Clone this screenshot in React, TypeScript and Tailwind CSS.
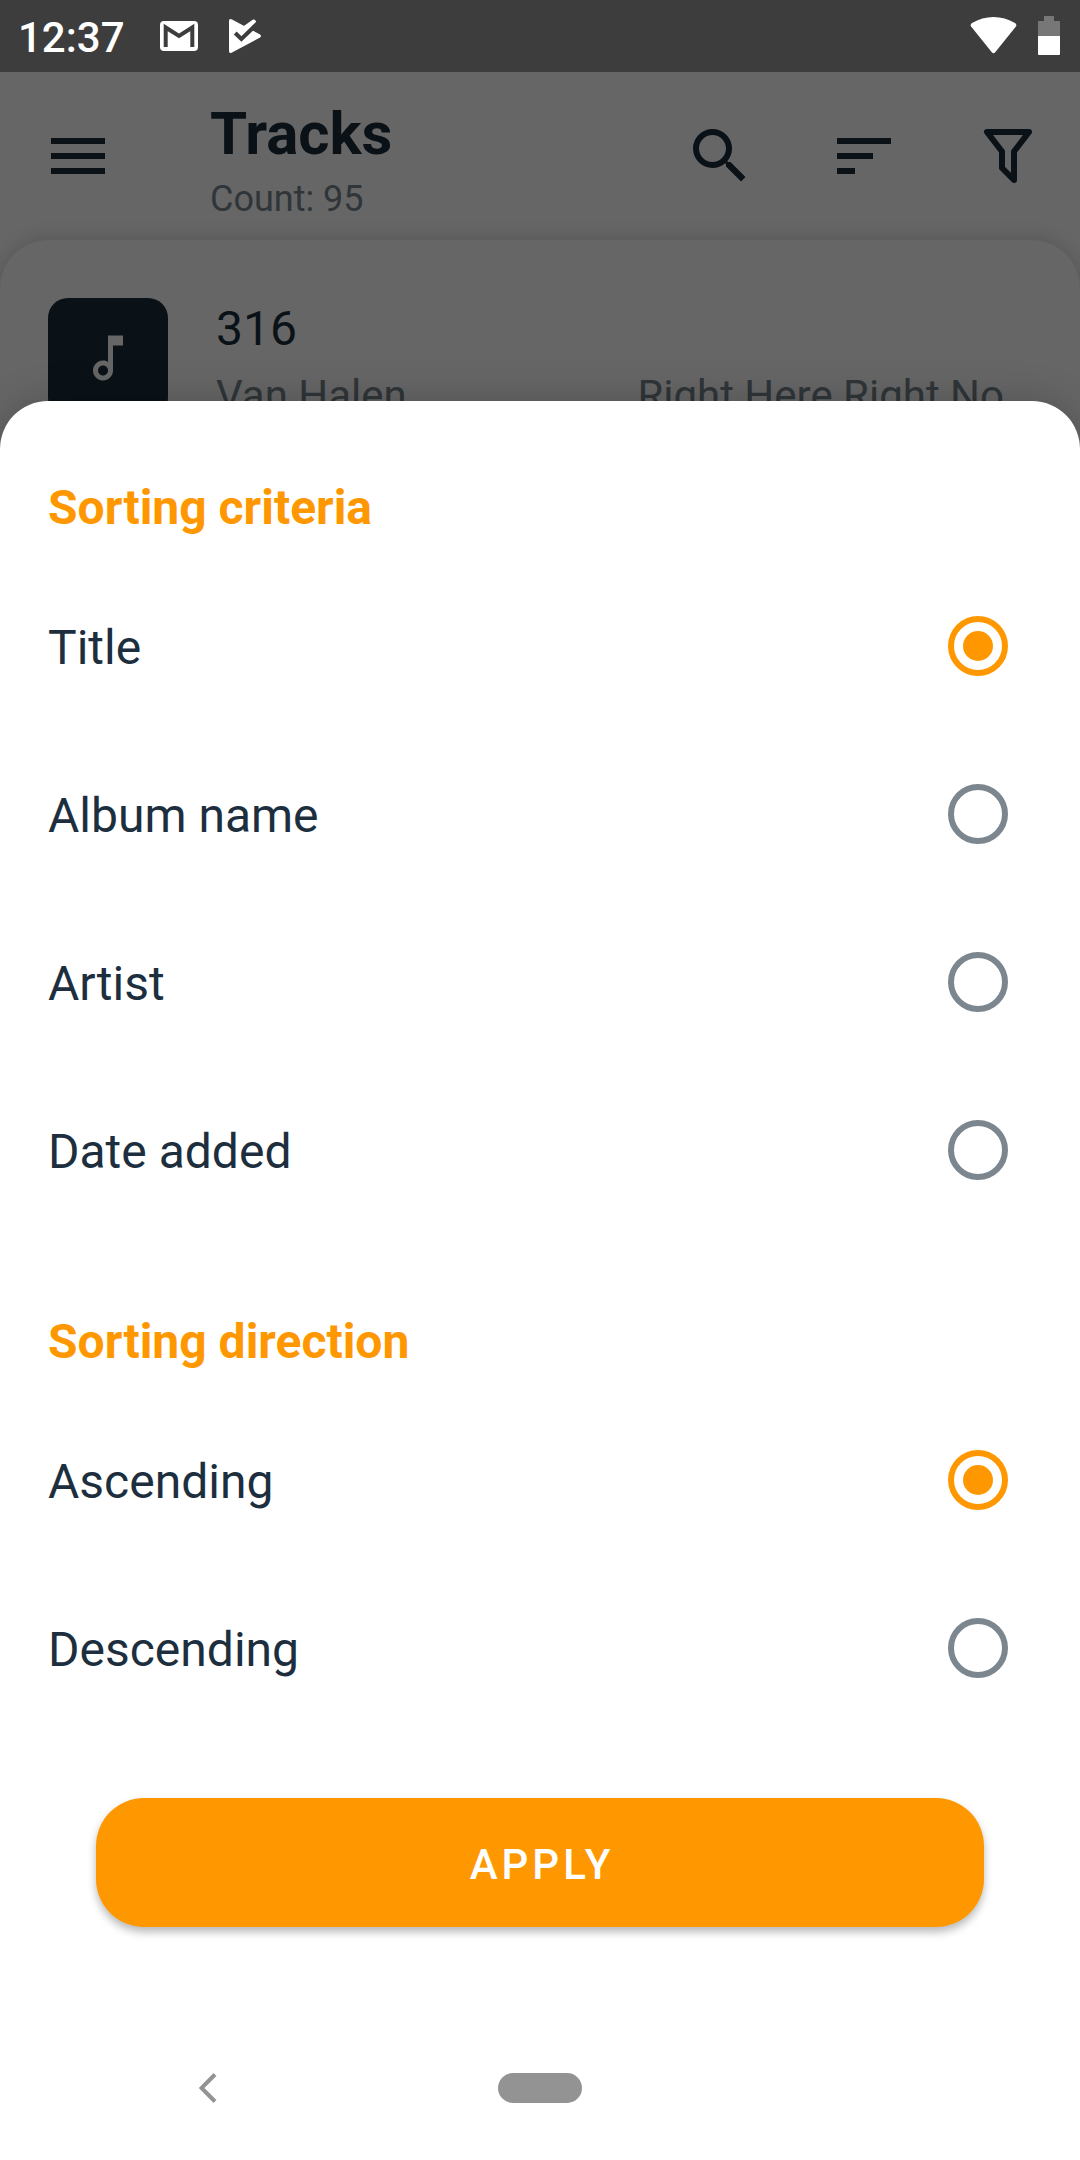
import { useState } from 'react';
import type { ReactNode } from 'react';

const CRITERIA = ['Title', 'Album name', 'Artist', 'Date added'];
const DIRECTIONS = ['Ascending', 'Descending'];

function StatusBar() {
  return (
    <div className="flex h-[72px] items-center bg-[#3d3d3d] pl-[18px] pr-5 text-white">
      <span className="pt-1 text-[42px] leading-[48px] font-medium">12:37</span>
      {/* mail notification */}
      <svg className="ml-[30px] h-9 w-12" viewBox="0 0 48 36" fill="none">
        <rect x="5" y="3" width="38" height="30" rx="4" fill="#fff" />
        <path d="M10.700 29V9.500L24 18l13.300-8.500V29" stroke="#3d3d3d" strokeWidth="4" />
      </svg>
      {/* play protect notification */}
      <svg className="ml-[18px] h-9 w-12" viewBox="0 0 48 36">
        <path d="M8 3v30q0 3 3 1.500l28-15q2-1.500 0-3L11 1.500Q8 0 8 3z" fill="#fff" />
        <path d="M20 10l12-8.500q1.500-.5 2.500 1t0 2.500L21 19z" fill="#fff" />
        <path d="M14.200 15l6.200 6L38 4" stroke="#3d3d3d" strokeWidth="4" fill="none" />
      </svg>
      <svg className="ml-auto h-10 w-12" viewBox="0 0 48 40">
        <path d="M1.500 11Q-.5 9 2 7Q12 1 23.500 1T45 7q2.500 2 .5 4L25 36.500q-1.500 1.500-3 0z" fill="#fff" />
      </svg>
      <svg className="ml-5 h-10 w-[22px]" viewBox="0 0 22 40">
        <path d="M6 0h10v5h5q1 0 1 1v14H0V6q0-1 1-1h5z" fill="#777" />
        <path d="M0 20h22v18q0 1-1 1H1q-1 0-1-1z" fill="#fff" />
      </svg>
    </div>
  );
}

function IconButton({ label, children }: { label: string; children: ReactNode }) {
  return (
    <button type="button" aria-label={label} className="flex h-[168px] w-36 items-center justify-center">
      <svg className="size-[72px]" viewBox="0 0 24 24" fill="currentColor">
        {children}
      </svg>
    </button>
  );
}

function AppBar() {
  return (
    <header className="flex h-[168px] items-center pl-1.5 text-[#0a1218]">
      <IconButton label="Menu">
        <path d="M3 18h18v-2H3v2zm0-5h18v-2H3v2zm0-7v2h18V6H3z" />
      </IconButton>
      <div className="ml-[60px] flex-1 pt-1.5">
        <h1 className="text-[60px] leading-[72px] font-bold">Tracks</h1>
        <p className="mt-2 text-[36px] leading-[42px] text-[#2f3538]">Count: 95</p>
      </div>
      <IconButton label="Search">
        <path d="M15.500 14h-.79l-.28-.27A6.471 6.471 0 0 0 16 9.500 6.500 6.500 0 1 0 9.500 16c1.610 0 3.090-.59 4.230-1.570l.27.28v.79l5 4.990L20.490 19l-4.990-5zm-6 0C7.010 14 5 11.990 5 9.500S7.010 5 9.500 5 14 7.010 14 9.500 11.990 14 9.500 14z" />
      </IconButton>
      <IconButton label="Sort">
        <path d="M3 18h6v-2H3v2zM3 6v2h18V6H3zm0 7h12v-2H3v2z" />
      </IconButton>
      <IconButton label="Filter">
        <path
          d="M5 4h14l-5 6.500V20l-4-4v-5.500z"
          fill="none"
          stroke="currentColor"
          strokeWidth="2"
          strokeLinejoin="round"
        />
      </IconButton>
    </header>
  );
}

function TrackList() {
  return (
    <section className="h-[209px] rounded-t-[48px] bg-[#666] px-12 pt-[58px] shadow-[0_0_20px_rgba(0,0,0,0.18)]">
      <div className="flex gap-12">
        <div className="flex size-[120px] items-center justify-center rounded-[20px] bg-[#0a1218] text-[#666]">
          <svg className="size-[60px]" viewBox="0 0 24 24" fill="currentColor">
            <path d="M12 3l.01 10.550c-.59-.34-1.270-.55-2-.55C7.790 13 6 14.790 6 17s1.790 4 4.010 4S14 19.210 14 17V7h4V3h-6zm-1.990 16c-1.100 0-2-.9-2-2s.9-2 2-2 2 .9 2 2-.9 2-2 2z" />
          </svg>
        </div>
        <div className="min-w-0 flex-1">
          <p className="text-[48px] leading-[62px] text-[#0a1218]">316</p>
          <div className="mt-3 flex justify-between pr-7 text-[42px] leading-[48px] text-[#2f3538]">
            <span>Van Halen</span>
            <span>Right Here Right No</span>
          </div>
        </div>
      </div>
    </section>
  );
}

interface RadioSectionProps {
  title: string;
  name: string;
  options: string[];
  value: string;
  onChange: (value: string) => void;
}

function RadioSection({ title, name, options, value, onChange }: RadioSectionProps) {
  return (
    <fieldset>
      <legend className="px-12 text-[48px] leading-[56px] font-bold text-[#ff9800]">{title}</legend>
      <div className="pt-[26px]">
        {options.map((option) => (
          <label key={option} className="flex h-[168px] items-center justify-between pl-12 pr-[72px]">
            <span className="pt-1 text-[48px] leading-[56px] text-[#1d2f3e]">{option}</span>
            <input
              type="radio"
              name={name}
              checked={value === option}
              onChange={() => onChange(option)}
              className="flex size-[60px] appearance-none items-center justify-center rounded-full border-6 border-[#7b868e] before:size-[30px] before:rounded-full checked:border-[#ff9800] checked:before:bg-[#ff9800]"
            />
          </label>
        ))}
      </div>
    </fieldset>
  );
}

function NavigationBar() {
  return (
    <nav className="grid h-36 grid-cols-[1fr_84px_1fr] items-center text-[#939393]">
      <button type="button" aria-label="Back" className="flex h-full items-center justify-center pr-[82px]">
        <svg className="h-[30px] w-[18px]" viewBox="0 0 18 30" fill="none">
          <path d="M16 1.500L2.500 15 16 28.500" stroke="currentColor" strokeWidth="4" />
        </svg>
      </button>
      <button type="button" aria-label="Home" className="h-[30px] rounded-full bg-[#939393]" />
    </nav>
  );
}

export default function App() {
  const [criteria, setCriteria] = useState('Title');
  const [direction, setDirection] = useState('Ascending');

  return (
    <div className="flex min-h-screen flex-col bg-[#666] font-[Roboto,sans-serif]">
      <StatusBar />
      <AppBar />
      <TrackList />

      {/* Bottom sheet overlaps the lower part of the track list */}
      <form
        className="relative -mt-12 flex flex-1 flex-col rounded-t-[48px] bg-white pt-[79px] shadow-[0_0_40px_rgba(0,0,0,0.2)]"
        onSubmit={(e) => e.preventDefault()}
      >
        <RadioSection title="Sorting criteria" name="criteria" options={CRITERIA} value={criteria} onChange={setCriteria} />
        <div className="mt-20">
          <RadioSection title="Sorting direction" name="direction" options={DIRECTIONS} value={direction} onChange={setDirection} />
        </div>
        <button
          type="submit"
          className="mx-24 mt-[66px] h-[129px] rounded-[48px] bg-[#ff9800] pt-1 pl-1 text-[42px] leading-[48px] font-medium tracking-[4px] text-white shadow-[0_5px_8px_rgba(0,0,0,0.28)]"
        >
          APPLY
        </button>
        <div className="mt-auto">
          <NavigationBar />
        </div>
      </form>
    </div>
  );
}
